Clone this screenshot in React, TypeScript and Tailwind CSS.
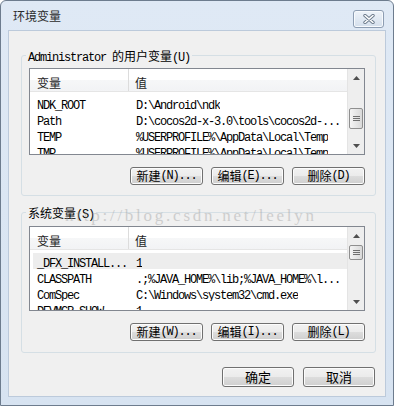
const CJK = /([\u2E80-\u9FFF\uFF00-\uFFEF]+)/;

// mixed SimSun-like text: half-width latin (mono), full-width CJK
function Txt({ s, big = false }: { s: string; big?: boolean }) {
  return (
    <>
      {s
        .split(CJK)
        .filter(Boolean)
        .map((part, i) =>
          CJK.test(part) ? (
            <span
              key={i}
              className={
                big
                  ? "font-['Noto_Sans_CJK_SC',sans-serif] text-[13px]"
                  : "font-['Noto_Sans_CJK_SC',sans-serif] text-[12px]"
              }
            >
              {part}
            </span>
          ) : (
            <span key={i} className="font-['Liberation_Mono',monospace] text-[12px] tracking-[-1.2px] whitespace-pre">
              {part}
            </span>
          )
        )}
    </>
  );
}

function Button({ label, w = 'w-[73px] h-[18px]', big = false }: { label: string; w?: string; big?: boolean }) {
  return (
    <button
      className={`${w} flex items-center justify-center rounded-[3px] border border-[#707070] bg-[linear-gradient(to_bottom,#f2f2f2_0%,#ebebeb_50%,#dddddd_50%,#cfcfcf_100%)] shadow-[inset_0_0_0_1px_#fcfcfc] text-black leading-[14px]`}
    >
      <Txt s={label} big={big} />
    </button>
  );
}

function Arrow({ down = false }: { down?: boolean }) {
  return (
    <div className="h-[17px] flex items-center justify-center">
      <svg width="7" height="4" viewBox="0 0 7 4">
        <path d={down ? 'M0 0 L7 0 L3.5 4Z' : 'M0 4 L3.5 0 L7 4Z'} fill="#4f4f4f" />
      </svg>
    </div>
  );
}

function ScrollBar({ thumb }: { thumb: string }) {
  return (
    <div className="w-[17px] shrink-0 flex flex-col bg-[#eeeeee] border-l border-[#e4e4e4]">
      <Arrow />
      <div className="flex-1 flex flex-col">
        <div
          className={`${thumb} mx-[1px] rounded-[2px] border border-[#8f8f8f] bg-[linear-gradient(to_right,#f4f4f4,#e6e6e6_50%,#d9d9d9)] flex flex-col items-center justify-center gap-[1px]`}
        >
          <div className="w-[7px] h-px bg-[#6f6f6f]" />
          <div className="w-[7px] h-px bg-[#6f6f6f]" />
          <div className="w-[7px] h-px bg-[#6f6f6f]" />
        </div>
      </div>
      <Arrow down />
    </div>
  );
}

function List({ rows, thumb, hl = -1, h }: { rows: string[][]; thumb: string; hl?: number; h: string }) {
  return (
    <div className={`${h} flex border border-[#828790] bg-white overflow-hidden`}>
      <div className="flex-1 flex flex-col min-w-0">
        <div className="h-[23px] shrink-0 flex border-b border-[#e5e5e5] bg-[linear-gradient(to_bottom,#ffffff_0%,#ffffff_50%,#f6f7f8_50%,#f2f3f5_100%)] text-[#1e1e1e] leading-[14px]">
          <div className="w-[99px] pl-[7px] pt-[6px] border-r border-[#dcdcdc]">
            <Txt s="变量" />
          </div>
          <div className="pl-[6px] pt-[6px]">
            <Txt s="值" />
          </div>
        </div>
        <div className="pt-[3px] flex flex-col text-black leading-[16px]">
          {rows.map((r, i) => (
            <div key={i} className={i === hl ? 'h-[16px] flex ml-[3px] bg-[#ededed]' : 'h-[16px] flex ml-[3px]'}>
              <div className="w-[97px] pl-[4px] shrink-0 whitespace-nowrap overflow-hidden">
                <Txt s={r[0]} />
              </div>
              <div className="pl-[6px] whitespace-nowrap overflow-hidden">
                <Txt s={r[1]} />
              </div>
            </div>
          ))}
        </div>
      </div>
      <ScrollBar thumb={thumb} />
    </div>
  );
}

type GroupProps = {
  title: string;
  rows: string[][];
  thumb: string;
  hl?: number;
  btns: string[];
  cls: string;
  pt: string;
  h: string;
};

function Group({ title, rows, thumb, hl, btns, cls, pt, h }: GroupProps) {
  return (
    <div className={`${cls} ml-[12px] w-[355px] border border-[#d5dfe5] rounded-[3px]`}>
      <div className="-mt-[8px] ml-[4px] px-[2px] w-fit h-[14px] leading-[14px] bg-[#f0f0f0] text-black whitespace-nowrap">
        <Txt s={title} />
      </div>
      <div className={`${pt} pl-[7px] pr-[10px]`}>
        <List rows={rows} thumb={thumb} hl={hl} h={h} />
        <div className="mt-[12px] flex justify-end gap-[8px]">
          {btns.map((b) => (
            <Button key={b} label={b} />
          ))}
        </div>
      </div>
    </div>
  );
}

export default function App() {
  return (
    <div className="relative w-[394px] h-[406px] flex flex-col px-[7px] border border-[#6d7c8e] rounded-t-[6px] bg-[linear-gradient(to_bottom,#dfe9f5,#d7e3f1)] overflow-hidden">
      {/* title bar */}
      <div className="h-[29px] shrink-0 flex items-start justify-between">
        <div className="pl-[5px] pt-[8px] font-['Noto_Sans_CJK_SC',sans-serif] text-[12px] leading-[14px] text-[#2b2b2b]">环境变量</div>
        <div className="mt-[9px] mr-[2px] w-[31px] h-[18px] rounded-[3px] border border-[#8d9db2] bg-[linear-gradient(to_bottom,#eef3f9,#d4dfec)] shadow-[inset_0_0_0_1px_#f7fafd] flex items-center justify-center">
          <svg width="12" height="10" viewBox="0 0 12 10">
            <path d="M2 1.5 L10 8.5 M10 1.5 L2 8.5" stroke="#6b7a8b" strokeWidth="3.4" strokeLinecap="round" />
            <path d="M2 1.5 L10 8.5 M10 1.5 L2 8.5" stroke="#ffffff" strokeWidth="1.6" strokeLinecap="round" />
          </svg>
        </div>
      </div>

      {/* client area */}
      <div className="h-[367px] shrink-0 flex flex-col border border-[#bccadb] bg-[#f0f0f0]">
        <Group
          cls="mt-[24px] pb-[10px]"
          pt="pt-[6px]"
          h="h-[87px]"
          title="Administrator 的用户变量(U)"
          rows={[
            ['NDK_ROOT', 'D:\\Android\\ndk'],
            ['Path', 'D:\\cocos2d-x-3.0\\tools\\cocos2d-...'],
            ['TEMP', '%USERPROFILE%\\AppData\\Local\\Temp'],
            ['TMP', '%USERPROFILE%\\AppData\\Local\\Temp'],
          ]}
          thumb="mt-[22px] h-[21px]"
          btns={['新建(N)...', '编辑(E)...', '删除(D)']}
        />
        <Group
          cls="mt-[16px] pb-[11px]"
          pt="pt-[7px]"
          h="h-[85px]"
          title="系统变量(S)"
          rows={[
            ['_DFX_INSTALL...', '1'],
            ['CLASSPATH', '.;%JAVA_HOME%\\lib;%JAVA_HOME%\\l...'],
            ['ComSpec', 'C:\\Windows\\system32\\cmd.exe'],
            ['DEVMGR_SHOW', '1'],
          ]}
          thumb="mt-[1px] h-[15px]"
          hl={0}
          btns={['新建(W)...', '编辑(I)...', '删除(L)']}
        />
        <div className="mt-[14px] pr-[10px] flex justify-end gap-[9px]">
          <Button label="确定" w="w-[72px] h-[20px]" big />
          <Button label="取消" w="w-[72px] h-[20px]" big />
        </div>
      </div>

      {/* blog watermark over the dialog */}
      <div className="absolute left-[64px] top-[205px] font-['Liberation_Serif',serif] text-[17px] leading-[20px] tracking-[2.75px] text-[#9a9a9a] opacity-40 pointer-events-none whitespace-nowrap">
        http://blog.csdn.net/leelyn
      </div>
    </div>
  );
}
